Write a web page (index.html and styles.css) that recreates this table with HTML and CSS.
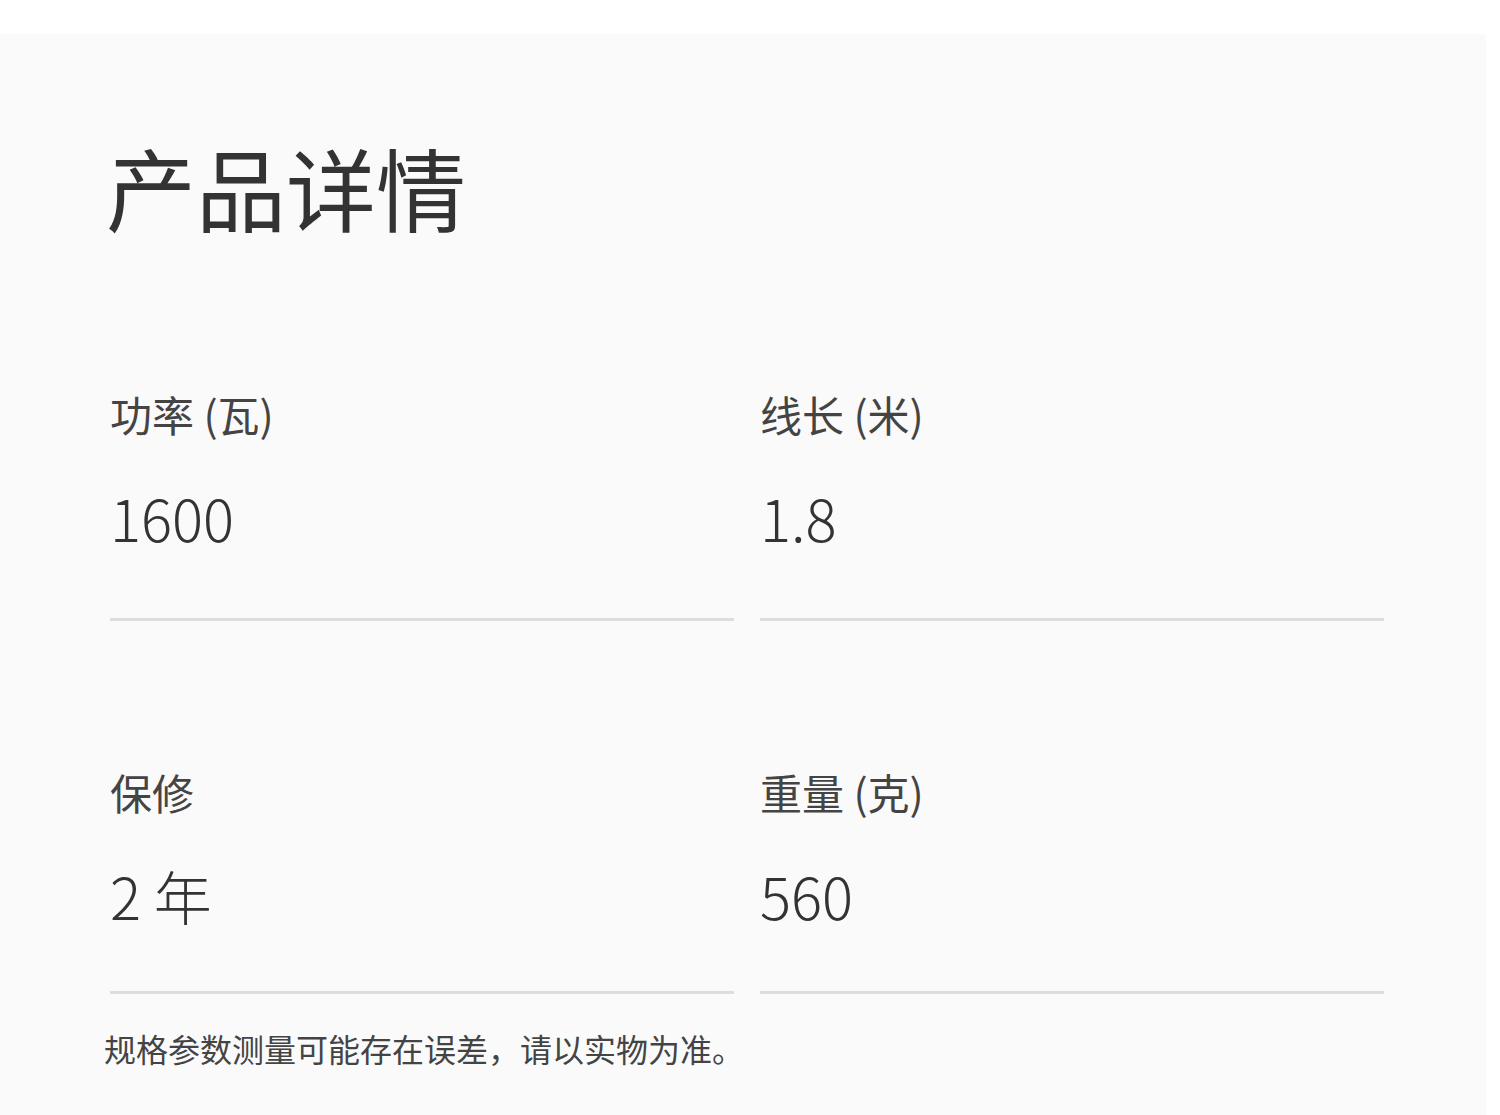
FILE: index.html
```html
<!DOCTYPE html>
<html lang="zh-CN">
<head>
<meta charset="utf-8">
<title>产品详情</title>
<link rel="stylesheet" href="styles.css">
</head>
<body>
<section class="panel">
  <h1 class="title">产品详情</h1>
  <div class="specs">
    <div class="spec">
      <div class="label">功率 (瓦)</div>
      <div class="value">1600</div>
    </div>
    <div class="spec">
      <div class="label">线长 (米)</div>
      <div class="value">1.8</div>
    </div>
    <div class="spec spec-last">
      <div class="label">保修</div>
      <div class="value">2 年</div>
    </div>
    <div class="spec spec-last">
      <div class="label">重量 (克)</div>
      <div class="value">560</div>
    </div>
  </div>
  <p class="note">规格参数测量可能存在误差，请以实物为准。</p>
</section>
</body>
</html>
```
FILE: styles.css
```css
html, body {
  margin: 0;
  padding: 0;
  background: #ffffff;
}

body {
  font-family: "Noto Sans CJK SC", "Noto Sans", sans-serif;
  color: #333333;
}

.panel {
  box-sizing: border-box;
  width: 1486px;
  min-height: 1081px;
  margin-top: 34px;
  background: #fafafa;
  padding: 107px 102px 40px 110px;
}

.title {
  margin: 0;
  font-size: 90px;
  line-height: 1;
  font-weight: 400;
  color: #333333;
  margin-left: -4px;
}

.specs {
  display: grid;
  grid-template-columns: 1fr 1fr;
  column-gap: 26px;
  row-gap: 150px;
  margin-top: 162px;
}

.spec {
  border-bottom: 3px solid #dddddd;
  padding-bottom: 72px;
}

.spec-last {
  padding-bottom: 67px;
}

.label {
  font-size: 42px;
  line-height: 1;
  color: #444444;
}

.value {
  margin-top: 53px;
  font-size: 58px;
  line-height: 1;
  font-weight: 300;
  color: #333333;
}

.note {
  margin: 38px 0 0 -6px;
  font-size: 32px;
  line-height: 1;
  color: #444444;
}
```
